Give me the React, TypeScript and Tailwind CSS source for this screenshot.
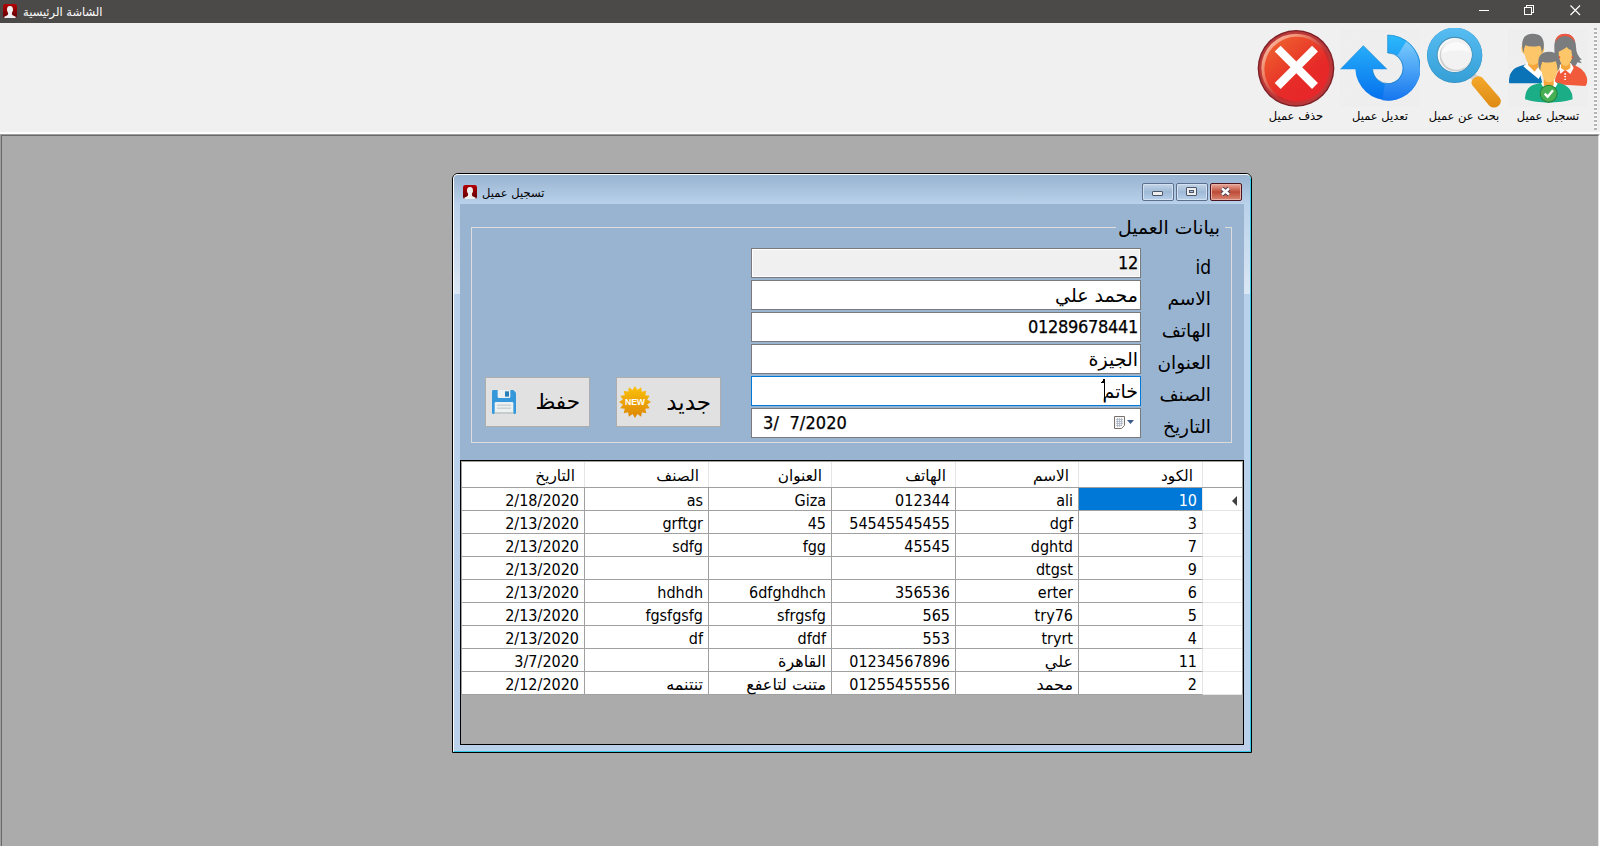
import React from "react";

const FONT = "font-['DejaVu_Sans_Condensed','DejaVu_Sans',sans-serif] [font-stretch:condensed]";
const ARABIC = "font-['DejaVu_Sans',sans-serif] [font-stretch:normal]";

function PersonBadge({ id }: { id: string }) {
  return (
    <svg viewBox="0 0 42 42" className="block h-3.5 w-3.5 shrink-0">
      <defs>
        <linearGradient id={id} x1="0" y1="0" x2="0" y2="1">
          <stop offset="0" stopColor="#b50005" />
          <stop offset="1" stopColor="#5e0002" />
        </linearGradient>
      </defs>
      <rect width="42" height="42" rx="7" fill={`url(#${id})`} />
      <path
        d="M21 6c-7 0-9 5-9 11 0 4 2 6 3 9 1 4 0 7-5 9l-6 3v4h34v-4l-6-3c-5-2-6-5-5-9 1-3 3-5 3-9 0-6-2-11-9-11z"
        fill="#efefef"
      />
    </svg>
  );
}

function DeleteIcon() {
  return (
    <svg viewBox="48 84 240 240" className="block h-20 w-20">
      <defs>
        <linearGradient id="delFill" x1="0" y1="0" x2="0.8" y2="1">
          <stop offset="0" stopColor="#f06a2f" />
          <stop offset="0.65" stopColor="#e62b28" />
          <stop offset="1" stopColor="#e8252a" />
        </linearGradient>
        <linearGradient id="delRim" x1="0" y1="0" x2="1" y2="1">
          <stop offset="0" stopColor="#ffd0bd" />
          <stop offset="0.3" stopColor="#f08a6c" />
          <stop offset="0.6" stopColor="#c22a2c" />
          <stop offset="1" stopColor="#d33a3a" />
        </linearGradient>
      </defs>
      <circle cx="168" cy="205" r="115" fill="#7d1f24" />
      <circle cx="168" cy="205" r="111" fill="#b9393b" />
      <circle cx="168" cy="205" r="104" fill="url(#delRim)" />
      <circle cx="170" cy="207" r="97" fill="url(#delFill)" />
      <path d="M113 146l112 112M225 146L113 258" stroke="#fff" strokeWidth="25" fill="none" />
    </svg>
  );
}

function EditIcon() {
  return (
    <svg viewBox="300 84 240 240" className="block h-20 w-20">
      <defs>
        <linearGradient id="arrowFill" x1="0" y1="0" x2="0" y2="1">
          <stop offset="0" stopColor="#2cb9fb" />
          <stop offset="1" stopColor="#0570ee" />
        </linearGradient>
        <linearGradient id="arrowSide" x1="0" y1="0" x2="0" y2="1">
          <stop offset="0" stopColor="#7accfc" />
          <stop offset="1" stopColor="#1575ee" />
        </linearGradient>
        <pattern id="hatch" width="8" height="8" patternUnits="userSpaceOnUse" patternTransform="rotate(45)">
          <path d="M0 0v8" stroke="#e6e6e6" strokeWidth="3" />
        </pattern>
      </defs>
      <rect x="300" y="87" width="240" height="234" fill="url(#hatch)" />
      <path
        d="M301 208L370 137l71 71h-43a46 46 0 1 0 45-49V105a98 98 0 1 1-97 103z"
        fill="url(#arrowFill)"
      />
      <path d="M499 124a98 98 0 0 1-72 177l8-51a46 46 0 0 0 36-81z" fill="url(#arrowSide)" />
      <path
        d="M301 208L370 137l71 71M443 159V105a98 98 0 0 1 97 98"
        fill="none"
        stroke="#1a86c8"
        strokeWidth="2"
      />
      <path d="M398 208a46 46 0 1 0 45-49" fill="none" stroke="#1a7fc0" strokeWidth="2" />
    </svg>
  );
}

function SearchIcon() {
  return (
    <svg viewBox="552 84 240 240" className="block h-20 w-20">
      <defs>
        <linearGradient id="ringFill" x1="0" y1="0" x2="0" y2="1">
          <stop offset="0" stopColor="#57bdf3" />
          <stop offset="1" stopColor="#359fd6" />
        </linearGradient>
        <linearGradient id="handleFill" x1="0" y1="0" x2="0" y2="1">
          <stop offset="0" stopColor="#f5a92c" />
          <stop offset="1" stopColor="#dd8a13" />
        </linearGradient>
      </defs>
      <path d="M690 222l22 16" stroke="#d2d2d2" strokeWidth="20" />
      <path
        d="M699 237q12-14 27-5l53 61q9 14-4 25-14 10-27-1l-51-61q-6-10 2-19z"
        fill="url(#handleFill)"
      />
      <circle cx="644" cy="166" r="83" fill="#2f8fc2" />
      <circle cx="644" cy="165" r="82" fill="url(#ringFill)" />
      <circle cx="644" cy="164" r="54" fill="#4a93b8" />
      <circle cx="644" cy="165" r="51" fill="#fbfbfb" />
      <circle cx="646" cy="167" r="47" fill="#cfcfcf" />
      <circle cx="649" cy="163" r="46" fill="#f2f2f2" />
      <path d="M604 160a45 45 0 0 1 86-4q-42-12-86 4z" fill="#fafafa" />
    </svg>
  );
}

function PeopleIcon() {
  return (
    <svg viewBox="804 84 240 240" className="block h-20 w-20">
      <rect x="804" y="87" width="240" height="234" fill="url(#hatch)" />
      <path d="M807 245q0-38 34-47l25-8h26l15 60H808z" fill="#0a73b7" />
      <path d="M850 199l14-12 22 22 14-14 8 20-12 22z" fill="#fff" />
      <path d="M864 187h30v14l-10 14-20-20z" fill="#f5a63c" />
      <path d="M849 130q-8 12-3 26l8 8q6 31 24 31t26-31l8-10q2-14-4-24l-6-16h-47z" fill="#fdc668" />
      <path d="M847 145q-5-44 31-44 38 0 33 44-4 8-5 16-3-24-7-24-26 6-43-1-5 10-5 24-2-8-4-15z" fill="#7a7c7e" />
      <path d="M948 190q-6-26-5-50 0-37 32-38 31 1 33 38 0 24 18 40l-8-1 7 11-13-3q-4 14-14 15l-18-4z" fill="#7a7c7e" />
      <path d="M945 128q3-27 30-27t30 27q-11-20-30-20t-30 20z" fill="#f0563d" />
      <path d="M944 253q0-40 28-51l22-8q40 8 47 40 2 19-5 24z" fill="#f15b3c" />
      <path d="M957 202l10-12h26l8 14-10 18-15-13-15 12z" fill="#fff" />
      <path d="M963 190h28v14q-14 14-28 0z" fill="#f5a63c" />
      <path d="M956 155q16-6 24-14 6 8 14 10l3 22q-9 24-20 25-15-2-20-24z" fill="#fdc668" />
      <circle cx="958" cy="172" r="3" fill="#f0563d" />
      <circle cx="997" cy="172" r="3" fill="#f0563d" />
      <path d="M973 222h5M973 230h5M973 238h5" stroke="#fff" strokeWidth="4" />
      <path d="M855 298q0-39 34-46l20-6h34l24 6q31 10 31 46-32 10-72 10t-71-10z" fill="#1bae86" />
      <path d="M903 250l10-7h30l10 8-11 18h-28z" fill="#fff" />
      <path d="M911 234h30v22q-15 12-30 0z" fill="#f5a63c" />
      <path d="M898 188q-6 12 1 22l6 6q6 31 22 31 18 0 24-31l6-7q5-12 0-22l-5-12h-47z" fill="#fdc668" />
      <path d="M896 202q-8-46 31-47 38 1 32 47l-6 12q-2-25-6-30-23 7-40 1-5 10-6 26z" fill="#7a7c7e" />
      <circle cx="926" cy="281" r="27" fill="#22803a" />
      <circle cx="926" cy="281" r="24" fill="#47b054" />
      <path d="M914 281l9 9 16-19" stroke="#fff" strokeWidth="7" fill="none" />
    </svg>
  );
}

function SaveIcon() {
  return (
    <svg viewBox="0 0 72 72" className="block h-6 w-6 shrink-0">
      <path d="M4 0h60l8 8v60q0 4-4 4H4q-4 0-4-4V4q0-4 4-4z" fill="#3498db" />
      <path d="M17 0h38v20q0 4-4 4H21q-4 0-4-4z" fill="#ecf0f1" />
      <rect x="39" y="4" width="12" height="16" fill="#2980b9" />
      <path d="M8 40q0-4 4-4h48q4 0 4 4v32H8z" fill="#ecf0f1" />
      <path d="M8 66h56v6H8z" fill="#c6ccce" />
      <path d="M15 45.500h42M15 54.500h42" stroke="#bdc3c7" strokeWidth="3" />
    </svg>
  );
}

function NewIcon() {
  const points = Array.from({ length: 32 }, (_, i) => {
    const r = i % 2 === 0 ? 48 : 37;
    const a = (i * Math.PI) / 16;
    return `${(48 + r * Math.sin(a)).toFixed(1)},${(48 - r * Math.cos(a)).toFixed(1)}`;
  }).join(" ");
  return (
    <svg viewBox="0 0 96 96" className="block h-8 w-8 shrink-0">
      <defs>
        <linearGradient id="newFill" x1="0" y1="0" x2="0" y2="1">
          <stop offset="0" stopColor="#fcc20a" />
          <stop offset="1" stopColor="#dc8503" />
        </linearGradient>
      </defs>
      <polygon points={points} fill="url(#newFill)" />
      <text
        x="48"
        y="57"
        textAnchor="middle"
        textLength="60"
        fontSize="26"
        fontWeight="700"
        fontFamily="Liberation Sans, sans-serif"
        fill="#fff"
      >
        NEW
      </text>
    </svg>
  );
}

const tools = [
  { label: "حذف عميل", icon: <DeleteIcon /> },
  { label: "تعديل عميل", icon: <EditIcon /> },
  { label: "بحث عن عميل", icon: <SearchIcon /> },
  { label: "تسجيل عميل", icon: <PeopleIcon /> },
];

const headers = ["التاريخ", "الصنف", "العنوان", "الهاتف", "الاسم", "الكود"];

const rows = [
  ["2/18/2020", "as", "Giza", "012344", "ali", "10"],
  ["2/13/2020", "grftgr", "45", "54545545455", "dgf", "3"],
  ["2/13/2020", "sdfg", "fgg", "45545", "dghtd", "7"],
  ["2/13/2020", "", "", "", "dtgst", "9"],
  ["2/13/2020", "hdhdh", "6dfghdhch", "356536", "erter", "6"],
  ["2/13/2020", "fgsfgsfg", "sfrgsfg", "565", "try76", "5"],
  ["2/13/2020", "df", "dfdf", "553", "tryrt", "4"],
  ["3/7/2020", "", "القاهرة", "01234567896", "علي", "11"],
  ["2/12/2020", "تنتنمه", "متنت لتاعفع", "01255455556", "محمد", "2"],
];

const isArabic = (s: string) => /[\u0600-\u06ff]/.test(s);

const GRID = "grid grid-cols-[123px_124px_123px_124px_123px_124px_39px]";

function TitleBar() {
  return (
    <header className="flex h-[23px] shrink-0 items-start bg-[#4c4a48] pl-[3px] text-white">
      <div className="pt-1">
        <PersonBadge id="badgeMain" />
      </div>
      <span dir="rtl" className={`ml-[6px] h-[23px] text-[11.500px] leading-[24px] ${ARABIC}`}>
        الشاشة الرئيسية
      </span>
      <svg viewBox="0 0 110 23" className="ml-auto block h-[23px] w-[110px]" fill="none" stroke="#fff" shapeRendering="crispEdges">
        <path d="M0 10.500h10" />
        <path d="M45.500 7.500h7v7h-7zM47.500 7.500v-2h7v7h-2" />
        <path d="M91.500 5.500l9.500 9.500M101 5.500L91.500 15" shapeRendering="auto" strokeWidth="1.200" />
      </svg>
      <div className="w-[11px]" />
    </header>
  );
}

function ToolBar() {
  return (
    <div className="flex h-[111px] shrink-0 justify-end border-b-2 border-white bg-[#f0f0f0] pt-[5px]">
      <div className="flex gap-1">
        {tools.map((t) => (
          <div key={t.label} className="flex w-20 flex-col items-center">
            {t.icon}
            <span dir="rtl" className={`text-[11.500px] leading-4 whitespace-nowrap text-black ${ARABIC}`}>
              {t.label}
            </span>
          </div>
        ))}
      </div>
      <div className="ml-[6px] h-[102px] w-[3px] bg-[repeating-linear-gradient(#b4b4b4_0_2px,#f8f8f8_2px_4px)]" />
      <div className="w-[3px]" />
    </div>
  );
}

function WindowButton({ kind }: { kind: "min" | "max" | "close" }) {
  return (
    <div
      className={
        kind === "close"
          ? "h-[18px] w-8 rounded-[2px] border border-[#4a1420] bg-linear-to-b from-[#e9a99d] via-[#bc4a36] via-50% to-[#d98774] shadow-[inset_0_0_0_1px_#e8b1a6]"
          : "h-[18px] w-8 rounded-[2px] border border-[#5d6f8f] bg-linear-to-b from-[#c3d5e8] via-[#9fb9d6] via-50% to-[#b7d0ea] shadow-[inset_0_0_0_1px_#d3e1f0]"
      }
    >
      <svg viewBox="0 0 30 16" className="block h-4 w-[30px]">
        {kind === "min" && <rect x="9.500" y="7.500" width="10" height="4" rx="0.500" fill="#eee" stroke="#4b5668" />}
        {kind === "max" && (
          <>
            <rect x="9.500" y="3.500" width="10" height="8" rx="0.500" fill="#eee" stroke="#4b5668" />
            <rect x="12.500" y="6.500" width="4" height="2" fill="#a9c0da" stroke="#4b5668" />
          </>
        )}
        {kind === "close" && (
          <>
            <path d="M11 4.500l7 6M18 4.500l-7 6" stroke="#4b4358" strokeWidth="4.400" />
            <path d="M11 4.500l7 6M18 4.500l-7 6" stroke="#fff" strokeWidth="2.400" />
          </>
        )}
      </svg>
    </div>
  );
}

const fields = [
  { label: "id", value: "12", box: "border-[#7a7a7a] bg-[#f0f0f0] shadow-[inset_0_0_0_1px_#fff]" },
  { label: "الاسم", value: "محمد علي", box: "border-[#7a7a7a] bg-white" },
  { label: "الهاتف", value: "01289678441", box: "border-[#7a7a7a] bg-white" },
  { label: "العنوان", value: "الجيزة", box: "border-[#7a7a7a] bg-white" },
  { label: "الصنف", value: "خاتم", box: "border-[#0078d7] bg-white", caret: true },
];

function FieldLabel({ text }: { text: string }) {
  return (
    <span
      className={`mr-5 ml-auto block h-[30px] pt-1 text-right leading-[30px] text-black ${
        isArabic(text) ? `text-[18.500px] ${ARABIC}` : "text-[19px]"
      }`}
    >
      {text}
    </span>
  );
}

function CustomerForm() {
  return (
    <div className="flex h-[256px] flex-col pt-[23px] pr-3 pl-[11px]">
      <fieldset className="relative flex h-[216px] border border-[#dcdcdc]">
        <div dir="rtl" className={`absolute -top-[14px] right-[6px] h-7 w-[109px] bg-[#99b4d1] pr-[5px] text-[18.800px] leading-[28px] whitespace-nowrap ${ARABIC}`}>
          بيانات العميل
        </div>
        <div className="flex gap-[26px] pt-[149px] pl-[13px]">
          <button className="flex h-[50px] w-[105px] items-center border border-[#adadad] bg-[#e1e1e1] pl-[6px]">
            <SaveIcon />
            <span dir="rtl" className={`mr-[9px] ml-auto text-[21.500px] leading-[46px] ${ARABIC}`}>حفظ</span>
          </button>
          <button className="flex h-[50px] w-[105px] items-center border border-[#adadad] bg-[#e1e1e1] pl-[2px]">
            <NewIcon />
            <span dir="rtl" className={`mr-[9px] ml-auto text-[23px] leading-[46px] ${ARABIC}`}>جديد</span>
          </button>
        </div>
        <div className="ml-auto flex w-[480px] flex-col gap-0.5 pt-5">
          {fields.map((f) => (
            <div key={f.label} className="flex">
              <div
                dir={isArabic(f.value) ? "rtl" : "ltr"}
                className={`flex h-[30px] w-[390px] items-start border pr-[2px] ${isArabic(f.value) ? `justify-start text-[19px] leading-[29px] ${ARABIC}` : "justify-end text-[18px] leading-[27px] tracking-[-0.3px] [-webkit-text-stroke:0.25px_#000]"} ${f.box}`}
              >
                <span>{f.value}</span>
                {f.caret && (
                  <svg viewBox="0 0 4 22" className="mt-0.5 -mr-0.5 block h-[22px] w-1">
                    <path d="M2 0h2v22h-1V4H0V3h1V2h1z" fill="#000" />
                  </svg>
                )}
              </div>
              <FieldLabel text={f.label} />
            </div>
          ))}
          <div className="flex">
            <div className="flex h-[30px] w-[390px] items-center border border-[#7a7a7a] bg-white pr-[5px] pl-[11px]">
              <span className="text-[18px] leading-[28px] tracking-[0.1px] whitespace-pre [-webkit-text-stroke:0.25px_#000]">{"3/  7/2020"}</span>
              <svg viewBox="0 0 22 14" className="ml-auto block h-3.5 w-[22px]">
                <path d="M1.500.5h10v9l-3 3h-7z" fill="#f7f7f7" stroke="#77706c" />
                <path d="M3 3.500h7M3 5.500h7M3 7.500h7M3 9.500h5M4.500 2v9M6.500 2v9M8.500 2v8" stroke="#a9b3c4" strokeWidth="0.800" />
                <path d="M14 4h7l-3.500 4z" fill="#3d5a8a" />
              </svg>
            </div>
            <FieldLabel text="التاريخ" />
          </div>
        </div>
      </fieldset>
    </div>
  );
}

function CustomerGrid() {
  return (
    <div className="flex-1 border border-black bg-[#ababab] text-black">
      <div className="w-[782px] border-t border-r border-l border-[#a0a0a0]">
        <div className={`${GRID} h-[26px] grid-rows-[25px] border-b border-[#a0a0a0] bg-white`}>
          {headers.map((h) => (
            <div key={h} dir="rtl" className={`border-r border-[#e5e5e5] pr-[9px] text-[15.300px] leading-[28px] ${ARABIC}`}>
              {h}
            </div>
          ))}
          <div />
        </div>
        {rows.map((r, i) => (
          <div key={i} className={`${GRID} grid-rows-[23px]`}>
            {r.map((c, j) => (
              <div
                key={j}
                dir={isArabic(c) ? "rtl" : "ltr"}
                className={`border-b border-[#a0a0a0] pr-[5px] text-right leading-[25px] whitespace-nowrap ${
                  isArabic(c) ? `text-[16px] ${ARABIC}` : "text-[16px]"
                } ${j === 5 ? "border-r border-r-[#e5e5e5]" : "border-r"} ${
                  i === 0 && j === 5 ? "bg-[#0078d7] text-white" : "bg-white"
                }`}
              >
                {c}
              </div>
            ))}
            <div className="flex items-center justify-end border-b border-[#e5e5e5] bg-white pr-[5px]">
              {i === 0 && (
                <svg viewBox="0 0 5 10" className="mt-1 block h-2.5 w-[5px]">
                  <path d="M5 0v10L0 5z" fill="#404040" />
                </svg>
              )}
            </div>
          </div>
        ))}
      </div>
    </div>
  );
}

function SideFrame() {
  return (
    <div className="flex w-1.5 flex-col">
      <div className="h-[90px] bg-linear-to-b from-[#b9d1ea] to-[#dbe7f4]" />
      <div className="flex-1 bg-[#b9d1ea]" />
    </div>
  );
}

function CustomerWindow() {
  return (
    <section className="mt-[37px] ml-[450px] flex h-[580px] w-[800px] overflow-hidden rounded-t-[6px] border border-black bg-white">
      <div className="flex flex-1 flex-col overflow-hidden rounded-t-[5px] border border-t-white border-r-[#36c9ea] border-b-[#36c9ea] border-l-white bg-[#b9d1ea]">
        <div className="flex h-[29px] bg-linear-to-b from-[#99b4d1] to-[#b9d1ea] pr-2 pl-[9px]">
          <div className="pt-2.5">
            <PersonBadge id="badgeChild" />
          </div>
          <span dir="rtl" className={`ml-[5px] text-[11.500px] leading-[37px] text-black ${ARABIC}`}>
            تسجيل عميل
          </span>
          <div className="ml-auto flex gap-0.5 pt-2">
            <WindowButton kind="min" />
            <WindowButton kind="max" />
            <WindowButton kind="close" />
          </div>
        </div>
        <div className="flex flex-1">
          <SideFrame />
          <main className="flex w-[784px] flex-col bg-[#99b4d1]">
            <CustomerForm />
            <CustomerGrid />
          </main>
          <SideFrame />
        </div>
        <div className="h-1.5 bg-linear-to-r from-[#b9d1ea] to-[#bfcfea]" />
      </div>
    </section>
  );
}

export default function App() {
  return (
    <div className={`flex h-[846px] w-[1600px] flex-col overflow-hidden bg-[#f0f0f0] ${FONT}`}>
      <TitleBar />
      <ToolBar />
      <div className="flex flex-1 border-t border-r border-l border-[#a0a0a0] border-r-white">
        <div className="flex-1 border-t border-r border-l border-[#696969] border-r-[#e3e3e3] bg-[#ababab]">
          <CustomerWindow />
        </div>
      </div>
    </div>
  );
}
